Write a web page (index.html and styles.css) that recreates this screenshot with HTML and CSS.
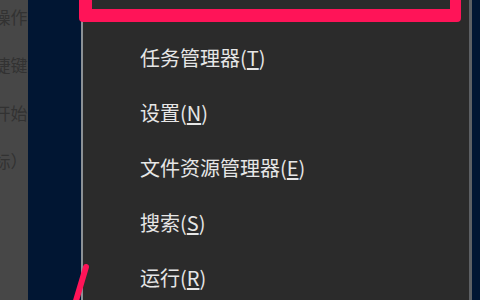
FILE: index.html
```html
<!DOCTYPE html>
<html lang="zh-CN">
<head>
  <meta charset="UTF-8">
  <title>Win+X 菜单</title>
  <link rel="stylesheet" href="styles.css">
</head>
<body>
  <div class="screen">
    <div class="doc">
      <div class="doc-line"><span>操作</span></div>
      <div class="doc-line"><span>捷键</span></div>
      <div class="doc-line"><span>开始</span></div>
      <div class="doc-line"><span>标）</span></div>
    </div>

    <div class="desktop"></div>

    <div class="menu">
      <div class="marked"></div>
      <div class="menu-item">任务管理器(<u>T</u>)</div>
      <div class="menu-item">设置(<u>N</u>)</div>
      <div class="menu-item">文件资源管理器(<u>E</u>)</div>
      <div class="menu-item">搜索(<u>S</u>)</div>
      <div class="menu-item">运行(<u>R</u>)</div>
    </div>

    <!-- annotation arrow -->
    <svg class="arrow" width="30" height="50" viewBox="0 0 30 50">
      <line x1="5" y1="54" x2="16" y2="17" stroke="#ff1458" stroke-width="6" stroke-linecap="round"/>
    </svg>
  </div>
</body>
</html>
```

FILE: styles.css
```css
body {
  margin: 0;
  background: #011633;
  font-family: "Noto Sans CJK SC", "Noto Sans", sans-serif;
}

.screen {
  position: relative;
  display: flex;
  width: 480px;
  height: 300px;
  overflow: hidden;
}

/* faded document on the left */
.doc {
  width: 28px;
  height: 300px;
  background: #474747;
  overflow: hidden;
  color: #323232;
  font-size: 17px;
  line-height: 48px;
}

.doc-line {
  display: flex;
  justify-content: flex-end;
  white-space: nowrap;
  padding-right: 0.5px;
}

.doc-line:first-child {
  margin-top: -7px;
}

.desktop {
  width: 53px;
}

/* context menu */
.menu {
  width: 386px;
  height: 300px;
  background: #2b2b2b;
  border-left: 2px solid #8c9196;
  border-right: 3px solid #5d6064;
  display: flex;
  flex-direction: column;
}

.marked {
  flex: none;
  height: 26px;
  width: 358px;
  margin-top: -30px;
  margin-left: -4px;
  margin-bottom: 8px;
  border: 13px solid #ff1458;
  border-right-width: 11px;
  border-radius: 4px;
}

.menu-item {
  flex: none;
  height: 55px;
  line-height: 55px;
  padding-left: 57px;
  color: #e6e6e6;
  font-size: 20px;
}

.menu-item u {
  text-underline-offset: 2px;
}

.arrow {
  position: absolute;
  left: 70px;
  top: 250px;
}
```
